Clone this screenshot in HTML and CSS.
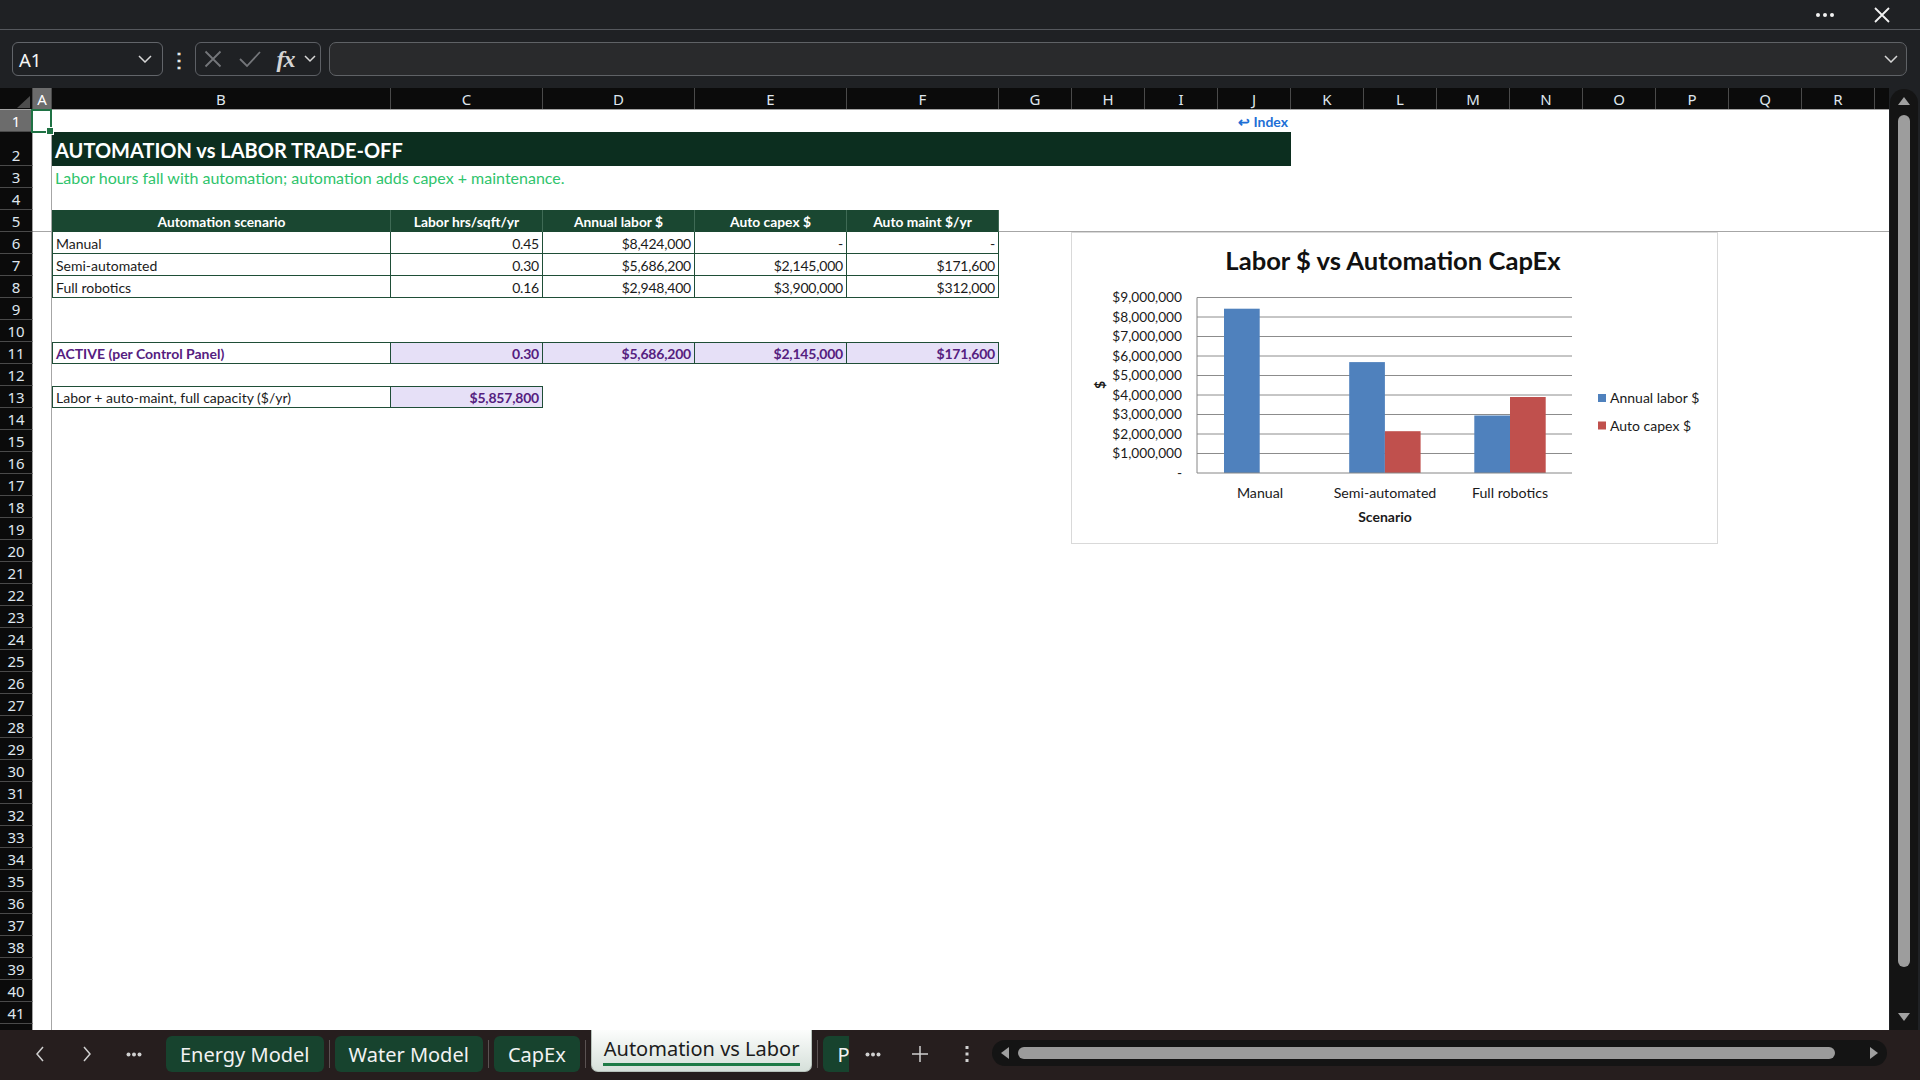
FILE: index.html
```html
<!DOCTYPE html>
<html lang="en">

<head>
    <meta charset="UTF-8">
    <title>Automation vs Labor</title>
    <link rel="stylesheet" href="styles.css">
</head>

<body>
    <div class="app">
        <div class="titlebar">
            <svg class="more" width="20" height="6" viewBox="0 0 20 6"><circle cx="3" cy="3" r="2"/><circle cx="10" cy="3" r="2"/><circle cx="17" cy="3" r="2"/></svg>
            <svg class="close" width="18" height="18" viewBox="0 0 18 18"><path d="M2 2 L16 16 M16 2 L2 16"/></svg>
        </div>

        <div class="formulabar">
            <div class="namebox">
                <span>A1</span>
                <svg class="chev" width="14" height="8" viewBox="0 0 14 8"><path d="M1 1 L7 7 L13 1"/></svg>
            </div>
            <div class="vdots">⋮</div>
            <div class="fxbox">
                <span class="slot slot-x"><svg width="18" height="18" viewBox="0 0 18 18"><path d="M1.5 1.5 L16.5 16.5 M16.5 1.5 L1.5 16.5"/></svg></span>
                <span class="slot slot-ok"><svg width="22" height="18" viewBox="0 0 22 18"><path d="M1 9 L8 16 L21 2"/></svg></span>
                <span class="slot slot-fx">fx</span>
                <span class="slot slot-dd"><svg class="chev" width="12" height="8" viewBox="0 0 12 8"><path d="M1 1 L6 6 L11 1"/></svg></span>
            </div>
            <div class="formula-input">
                <svg class="chev" width="14" height="8" viewBox="0 0 14 8"><path d="M1 1 L7 7 L13 1"/></svg>
            </div>
        </div>

        <div class="workspace">
            <div class="sheet">
                <div class="colheads">
                    <div class="corner"><span class="corner-tri"></span></div>
                    <div class="ch w-a on">A</div>
                    <div class="ch w-b">B</div>
                    <div class="ch w-n">C</div>
                    <div class="ch w-n">D</div>
                    <div class="ch w-n">E</div>
                    <div class="ch w-n">F</div>
                    <div class="ch w-s">G</div>
                    <div class="ch w-s">H</div>
                    <div class="ch w-s">I</div>
                    <div class="ch w-s">J</div>
                    <div class="ch w-s">K</div>
                    <div class="ch w-s">L</div>
                    <div class="ch w-s">M</div>
                    <div class="ch w-s">N</div>
                    <div class="ch w-s">O</div>
                    <div class="ch w-s">P</div>
                    <div class="ch w-s">Q</div>
                    <div class="ch w-s">R</div>
                    <div class="ch fill"></div>
                </div>

                <div class="rows">
                    <div class="row">
                        <div class="rh on">1</div>
                        <div class="cell ca sel"></div>
                        <div class="cell span-bj link">↩ Index</div>
                    </div>
                    <div class="row tall">
                        <div class="rh">2</div>
                        <div class="cell ca"></div>
                        <div class="cell span-bj title">AUTOMATION vs LABOR TRADE-OFF</div>
                    </div>
                    <div class="row">
                        <div class="rh">3</div>
                        <div class="cell ca"></div>
                        <div class="cell w-b note">Labor hours fall with automation; automation adds capex + maintenance.</div>
                    </div>
                    <div class="row">
                        <div class="rh">4</div>
                        <div class="cell ca"></div>
                    </div>
                    <div class="row freeze">
                        <div class="rh">5</div>
                        <div class="cell ca"></div>
                        <div class="cell w-b th first">Automation scenario</div>
                        <div class="cell w-n th">Labor hrs/sqft/yr</div>
                        <div class="cell w-n th">Annual labor $</div>
                        <div class="cell w-n th">Auto capex $</div>
                        <div class="cell w-n th">Auto maint $/yr</div>
                        <div class="cell fill"></div>
                    </div>
                    <div class="row">
                        <div class="rh">6</div>
                        <div class="cell ca"></div>
                        <div class="cell w-b td first">Manual</div>
                        <div class="cell w-n td num">0.45</div>
                        <div class="cell w-n td num">$8,424,000</div>
                        <div class="cell w-n td num">-</div>
                        <div class="cell w-n td num">-</div>
                    </div>
                    <div class="row">
                        <div class="rh">7</div>
                        <div class="cell ca"></div>
                        <div class="cell w-b td first">Semi-automated</div>
                        <div class="cell w-n td num">0.30</div>
                        <div class="cell w-n td num">$5,686,200</div>
                        <div class="cell w-n td num">$2,145,000</div>
                        <div class="cell w-n td num">$171,600</div>
                    </div>
                    <div class="row">
                        <div class="rh">8</div>
                        <div class="cell ca"></div>
                        <div class="cell w-b td first">Full robotics</div>
                        <div class="cell w-n td num">0.16</div>
                        <div class="cell w-n td num">$2,948,400</div>
                        <div class="cell w-n td num">$3,900,000</div>
                        <div class="cell w-n td num">$312,000</div>
                    </div>
                    <div class="row"><div class="rh">9</div><div class="cell ca"></div></div>
                    <div class="row"><div class="rh">10</div><div class="cell ca"></div></div>
                    <div class="row">
                        <div class="rh">11</div>
                        <div class="cell ca"></div>
                        <div class="cell w-b td first top active-label">ACTIVE (per Control Panel)</div>
                        <div class="cell w-n td top num hl">0.30</div>
                        <div class="cell w-n td top num hl">$5,686,200</div>
                        <div class="cell w-n td top num hl">$2,145,000</div>
                        <div class="cell w-n td top num hl">$171,600</div>
                    </div>
                    <div class="row"><div class="rh">12</div><div class="cell ca"></div></div>
                    <div class="row">
                        <div class="rh">13</div>
                        <div class="cell ca"></div>
                        <div class="cell w-b td first top">Labor + auto-maint, full capacity ($/yr)</div>
                        <div class="cell w-n td top num hl">$5,857,800</div>
                    </div>
                    <div class="row"><div class="rh">14</div><div class="cell ca"></div></div>
                    <div class="row"><div class="rh">15</div><div class="cell ca"></div></div>
                    <div class="row"><div class="rh">16</div><div class="cell ca"></div></div>
                    <div class="row"><div class="rh">17</div><div class="cell ca"></div></div>
                    <div class="row"><div class="rh">18</div><div class="cell ca"></div></div>
                    <div class="row"><div class="rh">19</div><div class="cell ca"></div></div>
                    <div class="row"><div class="rh">20</div><div class="cell ca"></div></div>
                    <div class="row"><div class="rh">21</div><div class="cell ca"></div></div>
                    <div class="row"><div class="rh">22</div><div class="cell ca"></div></div>
                    <div class="row"><div class="rh">23</div><div class="cell ca"></div></div>
                    <div class="row"><div class="rh">24</div><div class="cell ca"></div></div>
                    <div class="row"><div class="rh">25</div><div class="cell ca"></div></div>
                    <div class="row"><div class="rh">26</div><div class="cell ca"></div></div>
                    <div class="row"><div class="rh">27</div><div class="cell ca"></div></div>
                    <div class="row"><div class="rh">28</div><div class="cell ca"></div></div>
                    <div class="row"><div class="rh">29</div><div class="cell ca"></div></div>
                    <div class="row"><div class="rh">30</div><div class="cell ca"></div></div>
                    <div class="row"><div class="rh">31</div><div class="cell ca"></div></div>
                    <div class="row"><div class="rh">32</div><div class="cell ca"></div></div>
                    <div class="row"><div class="rh">33</div><div class="cell ca"></div></div>
                    <div class="row"><div class="rh">34</div><div class="cell ca"></div></div>
                    <div class="row"><div class="rh">35</div><div class="cell ca"></div></div>
                    <div class="row"><div class="rh">36</div><div class="cell ca"></div></div>
                    <div class="row"><div class="rh">37</div><div class="cell ca"></div></div>
                    <div class="row"><div class="rh">38</div><div class="cell ca"></div></div>
                    <div class="row"><div class="rh">39</div><div class="cell ca"></div></div>
                    <div class="row"><div class="rh">40</div><div class="cell ca"></div></div>
                    <div class="row"><div class="rh">41</div><div class="cell ca"></div></div>
                    <div class="row"><div class="rh"></div><div class="cell ca"></div></div>

                    <!-- floating chart over G..N -->
                    <div class="chart">
                        <svg width="645" height="310" viewBox="0 0 645 310">
                            <text class="ct" x="321" y="37">Labor $ vs Automation CapEx</text>

                            <g class="grid-lines">
                                <line x1="125" x2="500" y1="64.5" y2="64.5"/>
                                <line x1="125" x2="500" y1="84" y2="84"/>
                                <line x1="125" x2="500" y1="103.5" y2="103.5"/>
                                <line x1="125" x2="500" y1="123" y2="123"/>
                                <line x1="125" x2="500" y1="142.5" y2="142.5"/>
                                <line x1="125" x2="500" y1="162" y2="162"/>
                                <line x1="125" x2="500" y1="181.5" y2="181.5"/>
                                <line x1="125" x2="500" y1="201" y2="201"/>
                                <line x1="125" x2="500" y1="220.5" y2="220.5"/>
                            </g>

                            <g class="y-labels">
                                <text x="110" y="69">$9,000,000</text>
                                <text x="110" y="88.5">$8,000,000</text>
                                <text x="110" y="108">$7,000,000</text>
                                <text x="110" y="127.5">$6,000,000</text>
                                <text x="110" y="147">$5,000,000</text>
                                <text x="110" y="166.5">$4,000,000</text>
                                <text x="110" y="186">$3,000,000</text>
                                <text x="110" y="205.5">$2,000,000</text>
                                <text x="110" y="225">$1,000,000</text>
                                <text x="110" y="244.5">-</text>
                            </g>

                            <rect class="labor" x="152" y="75.7" width="35.7" height="164.3"/>
                            <rect class="labor" x="277.2" y="129.1" width="35.7" height="110.9"/>
                            <rect class="capex" x="312.9" y="198.2" width="35.7" height="41.8"/>
                            <rect class="labor" x="402.3" y="182.5" width="35.7" height="57.5"/>
                            <rect class="capex" x="438" y="164" width="35.7" height="76"/>

                            <line class="axis" x1="125" x2="125" y1="64.5" y2="240"/>
                            <line class="axis" x1="125" x2="500" y1="240" y2="240"/>

                            <g class="x-labels">
                                <text x="188" y="265">Manual</text>
                                <text x="313" y="265">Semi-automated</text>
                                <text x="438" y="265">Full robotics</text>
                            </g>
                            <text class="axis-title" x="313" y="289">Scenario</text>
                            <text class="axis-title" transform="translate(33 152) rotate(-90)">$</text>

                            <rect class="labor" x="526" y="161" width="8" height="8"/>
                            <text class="legend" x="538" y="170">Annual labor $</text>
                            <rect class="capex" x="526" y="188.5" width="8" height="8"/>
                            <text class="legend" x="538" y="197.5">Auto capex $</text>
                        </svg>
                    </div>
                </div>
            </div>

            <div class="vscroll">
                <div class="vtrack">
                    <svg class="arrow" width="12" height="8" viewBox="0 0 12 8"><path d="M6 0 L12 8 L0 8 Z"/></svg>
                    <div class="vthumb"></div>
                    <svg class="arrow down" width="12" height="8" viewBox="0 0 12 8"><path d="M0 0 L12 0 L6 8 Z"/></svg>
                </div>
            </div>
        </div>

        <div class="tabbar">
            <div class="nav">
                <svg width="10" height="16" viewBox="0 0 10 16"><path d="M8 1 L2 8 L8 15"/></svg>
            </div>
            <div class="nav">
                <svg width="10" height="16" viewBox="0 0 10 16"><path d="M2 1 L8 8 L2 15"/></svg>
            </div>
            <div class="nav">
                <svg class="dots" width="16" height="5" viewBox="0 0 16 5"><circle cx="2.5" cy="2.5" r="2"/><circle cx="8" cy="2.5" r="2"/><circle cx="13.5" cy="2.5" r="2"/></svg>
            </div>

            <div class="tabs">
                <div class="tab">Energy Model</div>
                <span class="sep"></span>
                <div class="tab">Water Model</div>
                <span class="sep"></span>
                <div class="tab">CapEx</div>
                <span class="sep"></span>
                <div class="tab current">Automation vs Labor</div>
                <span class="sep"></span>
                <div class="tab">Pricing Model</div>
            </div>

            <div class="nav">
                <svg class="dots" width="16" height="5" viewBox="0 0 16 5"><circle cx="2.5" cy="2.5" r="2"/><circle cx="8" cy="2.5" r="2"/><circle cx="13.5" cy="2.5" r="2"/></svg>
            </div>
            <div class="nav">
                <svg width="18" height="18" viewBox="0 0 18 18"><path d="M9 1 V17 M1 9 H17"/></svg>
            </div>
            <div class="nav">
                <svg class="dots" width="4" height="18" viewBox="0 0 4 18"><rect x="0.5" y="1" width="3" height="3"/><rect x="0.5" y="7.5" width="3" height="3"/><rect x="0.5" y="14" width="3" height="3"/></svg>
            </div>

            <div class="htrack">
                <svg class="arrow" width="8" height="12" viewBox="0 0 8 12"><path d="M8 0 L8 12 L0 6 Z"/></svg>
                <div class="hthumb"></div>
                <svg class="arrow right" width="8" height="12" viewBox="0 0 8 12"><path d="M0 0 L8 6 L0 12 Z"/></svg>
            </div>
        </div>
    </div>
</body>

</html>
```

FILE: styles.css
```css
* {
    box-sizing: border-box;
    margin: 0;
    padding: 0;
}

html,
body {
    width: 1920px;
    height: 1080px;
    overflow: hidden;
    background-color: #1f2124;
    font-family: 'Noto Sans', sans-serif;
}

.app {
    display: flex;
    flex-direction: column;
    height: 1080px;
}

/* top strip */
.titlebar {
    height: 30px;
    flex: none;
    display: flex;
    align-items: center;
    justify-content: flex-end;
    gap: 38px;
    padding-right: 29px;
    border-bottom: 1px solid #55585d;
}

.titlebar .more {
    fill: #f2f2f2;
}

.titlebar .close path {
    stroke: #f2f2f2;
    stroke-width: 1.8;
    fill: none;
}

.chev path {
    stroke: #d6d6d6;
    stroke-width: 1.5;
    fill: none;
}

/* formula bar */
.formulabar {
    height: 58px;
    flex: none;
    display: flex;
    align-items: center;
    padding: 0 13px 0 12px;
}

.namebox {
    width: 151px;
    height: 34px;
    border: 1px solid #62656a;
    border-radius: 6px;
    display: flex;
    align-items: center;
    justify-content: space-between;
    padding: 0 10px 0 6px;
    color: #f5f5f5;
    font-size: 18.5px;
}

.vdots {
    width: 32px;
    text-align: center;
    color: #e8e8e8;
    font-size: 20px;
    font-weight: bold;
}

.fxbox {
    width: 126px;
    height: 34px;
    border: 1px solid #5d6065;
    border-radius: 6px;
    display: flex;
    align-items: center;
}

.slot {
    display: flex;
    align-items: center;
    justify-content: center;
}

.slot-x {
    width: 34px;
}

.slot-ok {
    width: 39px;
}

.slot-x path,
.slot-ok path {
    stroke: #74767a;
    stroke-width: 1.8;
    fill: none;
}

.slot-fx {
    width: 33px;
    font-family: 'Liberation Serif', serif;
    font-style: italic;
    font-weight: bold;
    font-size: 24px;
    color: #d4d4d4;
    letter-spacing: -1px;
}

.slot-dd {
    width: 16px;
}

.formula-input {
    flex: 1;
    margin-left: 8px;
    height: 34px;
    background-color: #292a2c;
    border: 1px solid #5f6266;
    border-radius: 7px;
    display: flex;
    align-items: center;
    justify-content: flex-end;
    padding-right: 8px;
}

/* grid */
.workspace {
    height: 942px;
    flex: none;
    display: flex;
}

.sheet {
    width: 1889px;
    overflow: hidden;
    background-color: #fff;
    display: flex;
    flex-direction: column;
}

.colheads {
    height: 22px;
    flex: none;
    display: flex;
    background-color: #0b0b0b;
    border-bottom: 1px solid #a3a3a3;
    color: #dfe6ee;
    font-size: 15px;
}

.corner {
    width: 33px;
    flex: none;
    position: relative;
    border-right: 1px solid #4a4a4a;
}

.corner-tri {
    position: absolute;
    right: 2px;
    bottom: 1px;
    width: 13px;
    height: 12px;
    background-color: #4d4d4d;
    clip-path: polygon(100% 0, 100% 100%, 0 100%);
}

.ch {
    flex: none;
    display: flex;
    align-items: center;
    justify-content: center;
    border-right: 1px solid #4a4a4a;
    line-height: 1;
    padding-top: 1px;
}

.ch.on {
    background-color: #6c6c6c;
    color: #fff;
}

.ch.fill {
    flex: 1;
    border-right: none;
}

.w-a {
    width: 19px;
}

.w-b {
    width: 339px;
}

.w-n {
    width: 152px;
}

.w-s {
    width: 73px;
}

.rows {
    position: relative;
    flex: 1;
}

.row {
    display: flex;
    height: 22px;
}

.row.tall {
    height: 34px;
}

.rh {
    width: 33px;
    flex: none;
    background-color: #0b0b0b;
    color: #dfe6ee;
    font-size: 15px;
    line-height: 20px;
    border-bottom: 1px solid #4a4a4a;
    border-right: 1px solid #a3a3a3;
    display: flex;
    align-items: flex-end;
    justify-content: center;
}

.rh.on {
    background-color: #6c6c6c;
    color: #fff;
}

.cell {
    flex: none;
    height: 100%;
    display: flex;
    align-items: center;
    padding: 1px 3px 0;
    white-space: nowrap;
    font-family: 'Lato', sans-serif;
    font-size: 14px;
    color: #1b1b1b;
}

.cell.fill {
    flex: 1;
}

.ca {
    width: 19px;
    padding: 0;
    border-right: 1px solid #a6a6a6;
}

.sel {
    position: relative;
}

.sel::after {
    content: "";
    position: absolute;
    left: -2px;
    top: -1px;
    right: -1px;
    bottom: -1px;
    border: 2px solid #1f7244;
}

.sel::before {
    content: "";
    position: absolute;
    right: -3px;
    bottom: -3px;
    width: 6px;
    height: 6px;
    background-color: #1f7244;
    border: 1px solid #fff;
    z-index: 1;
}

.span-bj {
    width: 1239px;
}

.link {
    justify-content: flex-end;
    color: #1d6fd6;
    font-weight: bold;
    font-size: 14px;
}

.title {
    background-color: #0c2e1f;
    color: #fff;
    font-weight: bold;
    font-size: 20px;
}

.note {
    color: #2fc46c;
    font-size: 16px;
    overflow: visible;
}

.freeze .ca,
.freeze .fill {
    border-bottom: 1px solid #a6a6a6;
}

.th {
    background-color: #1a4731;
    color: #fff;
    font-weight: bold;
    font-size: 13.8px;
    justify-content: center;
    border-right: 1px solid #3f6a55;
}

.th.first {
    border-left: 1px solid #1a4731;
}

.td {
    border-right: 1px solid #1f4e37;
    border-bottom: 1px solid #1f4e37;
}

.td.first {
    border-left: 1px solid #1f4e37;
}

.td.top {
    border-top: 1px solid #1f4e37;
}

.num {
    justify-content: flex-end;
    letter-spacing: -0.2px;
}

.hl {
    background-color: #e6e0f7;
    color: #55207f;
    font-weight: bold;
}

.active-label {
    color: #55207f;
    font-weight: bold;
}

/* chart */
.chart {
    position: absolute;
    left: 1071px;
    top: 122px;
    width: 647px;
    height: 312px;
    background-color: #fff;
    border: 1px solid #d9d9d9;
}

.chart svg {
    display: block;
    font-family: 'Lato', sans-serif;
}

.ct {
    font-size: 25.6px;
    font-weight: bold;
    fill: #111;
    text-anchor: middle;
}

.grid-lines line {
    stroke: #8c8c8c;
    stroke-width: 1;
}

.axis {
    stroke: #868686;
    stroke-width: 1;
}

.y-labels text {
    font-size: 13.7px;
    fill: #1a1a1a;
    text-anchor: end;
}

.x-labels text {
    font-size: 14.2px;
    fill: #1a1a1a;
    text-anchor: middle;
}

.axis-title {
    font-size: 14px;
    font-weight: bold;
    fill: #1a1a1a;
    text-anchor: middle;
}

.legend {
    font-size: 14px;
    fill: #1a1a1a;
}

.labor {
    fill: #4f81bd;
}

.capex {
    fill: #c0504d;
}

/* vertical scroller */
.vscroll {
    width: 31px;
    flex: none;
    padding: 1px 2px 0 1px;
}

.vtrack {
    height: 100%;
    background-color: #141414;
    border-radius: 14px 14px 0 0;
    display: flex;
    flex-direction: column;
    align-items: center;
    padding: 8px 0 9px;
}

.vtrack .arrow {
    fill: #a0a0a0;
}

.vthumb {
    width: 12px;
    height: 852px;
    margin-top: 10px;
    border-radius: 6px;
    background-color: #9d9d9d;
}

.vtrack .down {
    margin-top: auto;
}

/* sheet tabs */
.tabbar {
    height: 50px;
    flex: none;
    display: flex;
    align-items: flex-start;
    background-color: #261e1e;
    padding-left: 16px;
    color: #d8d8d8;
}

.nav {
    width: 47px;
    height: 48px;
    flex: none;
    display: flex;
    align-items: center;
    justify-content: center;
}

.nav path {
    stroke: #d0d0d0;
    stroke-width: 1.5;
    fill: none;
}

.nav .dots {
    fill: #d0d0d0;
}

.tabs {
    width: 683px;
    margin-left: 9px;
    flex: none;
    display: flex;
    align-items: flex-start;
    overflow: hidden;
}

.tab {
    flex: none;
    height: 36px;
    margin-top: 6px;
    padding: 0 14px;
    border-radius: 6px;
    background-color: #17432e;
    color: #f2f2f2;
    font-size: 20px;
    display: flex;
    align-items: center;
}

.tab.current {
    height: 42px;
    margin-top: 0;
    padding: 0 12px 4px;
    border-radius: 0 0 7px 7px;
    border: 1px solid #b7c2bb;
    border-top: none;
    background: linear-gradient(#fcfdfc, #d6e0da);
    color: #1c1c1c;
    position: relative;
}

.tab.current::after {
    content: "";
    position: absolute;
    left: 11px;
    right: 11px;
    bottom: 5px;
    height: 3px;
    background-color: #1e7a46;
}

.sep {
    width: 1px;
    height: 28px;
    margin: 10px 5px 0;
    flex: none;
    background-color: #5a5252;
}

.htrack {
    width: 895px;
    height: 26px;
    margin-left: 2px;
    margin-top: 10px;
    flex: none;
    background-color: #141414;
    border-radius: 13px;
    display: flex;
    align-items: center;
    padding: 0 9px;
    gap: 9px;
}

.htrack .arrow {
    fill: #a0a0a0;
    flex: none;
}

.htrack .right {
    margin-left: auto;
}

.hthumb {
    width: 817px;
    height: 12px;
    border-radius: 6px;
    background-color: #9b9b9b;
}
```
